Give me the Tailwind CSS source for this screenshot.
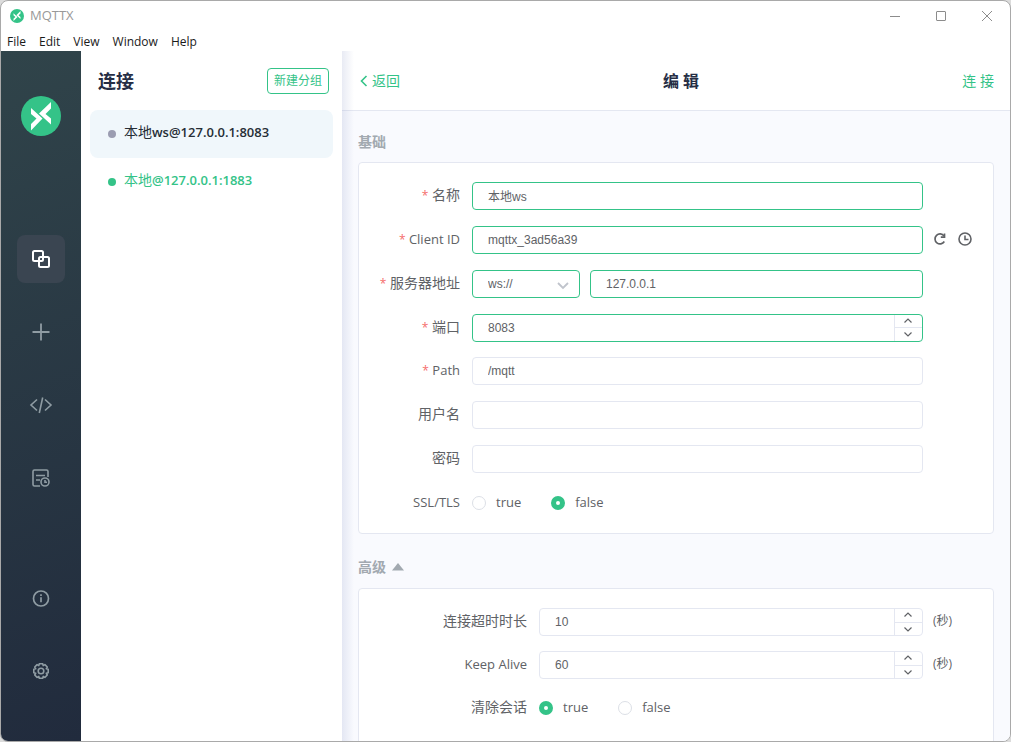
<!DOCTYPE html>
<html lang="zh-CN">
<head>
  <meta charset="UTF-8" />
  <meta name="viewport" content="width=device-width, initial-scale=1" />
  <title>MQTTX</title>
  <!-- Tailwind CSS -->
  <script src="https://cdn.jsdelivr.net/npm/@tailwindcss/browser@4"></script>
</head>
<body class="bg-[#dcdcdc] font-['Open_Sans','Noto_Sans_CJK_SC',sans-serif] text-[#606266]">
  <div class="flex h-screen flex-col overflow-hidden rounded-lg border border-[#a9a9a9] bg-white">

    <!-- Title bar -->
    <header>
      <div class="flex h-[29px] items-center justify-between pl-[9px] pr-[17px]">
        <div class="flex items-center gap-1.5 text-[13px] text-[#999]">
          <svg class="size-3.5" viewBox="0 0 40 40"><circle cx="20" cy="20" r="20" fill="#34c388"/><path fill="#fff" d="M10 12 21.500 22.500 10 34.500V28L15.500 22.500 10 18ZM30 6V12.500L24.500 18 30 22.500V28.500L18 17.500Z"/></svg>
          <span>MQTTX</span>
        </div>
        <div class="flex items-center gap-[34px] text-[#8c8c8c]">
          <button type="button" aria-label="Minimize"><svg class="size-3" viewBox="0 0 12 12" fill="none" stroke="currentColor"><path d="M1 6.500h10"/></svg></button>
          <button type="button" aria-label="Maximize"><svg class="size-3" viewBox="0 0 12 12" fill="none" stroke="currentColor"><rect x="1.500" y="1.500" width="9" height="9" rx=".5"/></svg></button>
          <button type="button" aria-label="Close"><svg class="size-3" viewBox="0 0 12 12" fill="none" stroke="currentColor"><path d="m1 1 10 10M11 1 1 11"/></svg></button>
        </div>
      </div>
      <nav class="flex h-[21px] items-center gap-[13px] pt-0.5 pl-1.5 text-xs text-[#1a1a1a]">
        <button type="button">File</button>
        <button type="button">Edit</button>
        <button type="button">View</button>
        <button type="button">Window</button>
        <button type="button">Help</button>
      </nav>
    </header>

    <div class="flex min-h-0 flex-1">
      <!-- Left bar -->
      <aside class="flex w-20 shrink-0 flex-col items-center bg-linear-[160deg] from-[#30444a] to-[#212b3d] pt-[45px] pb-[46px] text-[#8f9ca3]">
        <svg class="size-10 shrink-0" viewBox="0 0 40 40"><circle cx="20" cy="20" r="20" fill="#34c388"/><path fill="#fff" d="M10 12 21.500 22.500 10 34.500V28L15.500 22.500 10 18ZM30 6V12.500L24.500 18 30 22.500V28.500L18 17.500Z"/></svg>
        <nav class="mt-[99px] flex flex-1 flex-col gap-[25px]">
          <a href="#" aria-label="Connections" class="flex size-12 items-center justify-center rounded-lg bg-[#3a4551] text-white">
            <svg class="size-5" viewBox="0 0 20 20" fill="none" stroke="currentColor" stroke-width="2"><rect x="2" y="2" width="10" height="10" rx="1.500"/><rect x="8" y="8" width="10" height="10" rx="1.500"/></svg>
          </a>
          <a href="#" aria-label="New connection" class="flex size-12 items-center justify-center">
            <svg class="size-5" viewBox="0 0 20 20" fill="none" stroke="currentColor" stroke-width="1.800"><path d="M10 1.500v17M1.500 10h17"/></svg>
          </a>
          <a href="#" aria-label="Scripts" class="flex size-12 items-center justify-center">
            <svg class="h-5 w-6" viewBox="0 0 24 20" fill="none" stroke="currentColor" stroke-width="1.600"><path d="M8 4.500 2 10l6 5.500M16 4.500l6 5.500-6 5.500M13.700 2.500l-3.400 15.500"/></svg>
          </a>
          <a href="#" aria-label="Logs" class="flex size-12 items-center justify-center">
            <svg class="size-5" viewBox="0 0 20 20" fill="none" stroke="currentColor" stroke-width="1.600"><path d="M9 18H3.500A1.500 1.500 0 0 1 2 16.500v-13A1.500 1.500 0 0 1 3.500 2h12A1.500 1.500 0 0 1 17 3.500V9M5 7.500h9M5 12h4"/><circle cx="14" cy="14" r="4"/><path d="M14 12v2.300h2"/></svg>
          </a>
          <a href="#" aria-label="About" class="mt-auto flex size-12 items-center justify-center">
            <svg class="size-5" viewBox="0 0 20 20" fill="none" stroke="currentColor" stroke-width="1.700"><circle cx="10" cy="10.500" r="7.500"/><path d="M10 9.300v5M10 6.300v1.700"/></svg>
          </a>
          <a href="#" aria-label="Settings" class="flex size-12 items-center justify-center">
            <svg class="size-5" viewBox="0 0 20 20" fill="none" stroke="currentColor" stroke-width="1.600" stroke-linejoin="round"><path d="M7.800 4.600 8.300 2.700h3.400l.5 1.900 1.700-1 2.400 2.400-1 1.700 1.900.5v3.600l-1.900.5 1 1.700-2.400 2.400-1.700-1-.5 1.900H8.300l-.5-1.900-1.700 1L3.700 14l1-1.700-1.900-.5V8.200l1.900-.5-1-1.700 2.400-2.400Z"/><circle cx="10" cy="10" r="2.800"/></svg>
          </a>
        </nav>
      </aside>

      <!-- Connection list -->
      <section class="w-[261px] shrink-0 px-[9px]">
        <div class="flex h-[59px] items-center justify-between pl-2 pr-1">
          <h1 class="text-lg font-bold text-[#262e45]">连接</h1>
          <button type="button" class="h-[26px] rounded border border-[#34c388] px-1.5 text-xs text-[#34c388]">新建分组</button>
        </div>
        <ul class="text-[13px] font-semibold">
          <li>
            <a href="#" class="flex h-12 items-center gap-2 rounded-lg bg-[#f0f7fb] pl-[18px] text-[#262e36]">
              <span class="size-2 rounded-full bg-[#9b9db1]"></span>
              <span class="pb-1"><span class="text-sm font-normal">本地</span>ws@127.0.0.1:8083</span>
            </a>
          </li>
          <li>
            <a href="#" class="flex h-12 items-center gap-2 rounded-lg pl-[18px] text-[#34c388]">
              <span class="size-2 rounded-full bg-[#34c388]"></span>
              <span class="pb-1"><span class="text-sm font-normal">本地</span>@127.0.0.1:1883</span>
            </a>
          </li>
        </ul>
      </section>

      <!-- Editor -->
      <main class="relative flex min-w-0 flex-1 flex-col bg-[#f9fafe]">
        <div class="pointer-events-none absolute inset-y-0 left-0 w-3 bg-linear-to-r from-[#8f9bc8]/20 to-transparent"></div>
        <div class="grid h-[60px] shrink-0 grid-cols-3 items-center border-b border-[#e4e7f1] bg-white px-4 text-sm">
          <a href="#" class="flex items-center gap-1 justify-self-start pl-0.5 text-[#34c388]">
            <svg class="h-3 w-2" viewBox="0 0 8 12" fill="none" stroke="currentColor" stroke-width="1.600"><path d="M6.500 1 1.500 6l5 5"/></svg>
            返回
          </a>
          <h2 class="justify-self-center pl-2.5 text-base font-bold text-[#262e45]">编 辑</h2>
          <button type="button" class="justify-self-end text-[#34c388]">连 接</button>
        </div>

        <form class="min-h-0 flex-1 overflow-hidden px-4 pt-[21px] text-sm">
          <h3 class="h-5 text-sm leading-5 font-bold text-[#a2a9b0]">基础</h3>
          <div class="mt-2.5 flex min-h-[372px] flex-col justify-between rounded border border-[#e4e7f1] bg-white pt-[19px] pr-[70px] pb-4">
            <div class="flex h-7 items-center gap-3">
              <label for="name" class="w-[101px] shrink-0 pb-0.5 text-right"><span class="text-xs text-[#f56c6c]">*</span> 名称</label>
              <input id="name" type="text" value="本地ws" class="h-7 min-w-0 flex-1 rounded border border-[#34c388] bg-white px-[15px] pb-0.5 font-['Liberation_Sans','Noto_Sans_CJK_SC',sans-serif] text-xs outline-none">
            </div>
            <div class="relative flex h-7 items-center gap-3">
              <label for="clientId" class="w-[101px] shrink-0 pb-0.5 text-right text-[13px]"><span class="text-xs text-[#f56c6c]">*</span> Client ID</label>
              <input id="clientId" type="text" value="mqttx_3ad56a39" class="h-7 min-w-0 flex-1 rounded border border-[#34c388] bg-white px-[15px] font-['Liberation_Sans','Noto_Sans_CJK_SC',sans-serif] text-xs outline-none">
              <div class="absolute left-full -mt-0.5 ml-2.5 flex gap-[11px]">
                <button type="button" aria-label="Refresh"><svg class="size-3.5" viewBox="0 0 14 14" fill="none" stroke="currentColor" stroke-width="1.700"><path d="M11.300 9.500A5 5 0 1 1 11 3.900"/><path d="M11.500 1.500v3.700H7.800"/></svg></button>
                <button type="button" aria-label="Timestamp"><svg class="size-3.5" viewBox="0 0 14 14" fill="none" stroke="currentColor" stroke-width="1.600"><circle cx="7" cy="7" r="6"/><path d="M7 3.500V7.500h3.500"/></svg></button>
              </div>
            </div>
            <div class="flex h-7 items-center gap-3">
              <label for="host" class="w-[101px] shrink-0 pb-0.5 text-right"><span class="text-xs text-[#f56c6c]">*</span> 服务器地址</label>
              <div class="flex min-w-0 flex-1 gap-2.5">
                <div class="relative w-[108px] shrink-0">
                  <select aria-label="Protocol" class="h-7 w-full appearance-none rounded border border-[#34c388] bg-white px-[15px] font-['Liberation_Sans',sans-serif] text-xs outline-none">
                    <option>ws://</option>
                  </select>
                  <svg class="pointer-events-none absolute top-2 right-2.5 size-3.5 text-[#c0c4cc]" viewBox="0 0 14 14" fill="none" stroke="currentColor" stroke-width="1.800"><path d="m2 5 5 5 5-5"/></svg>
                </div>
                <input id="host" type="text" value="127.0.0.1" class="h-7 min-w-0 flex-1 rounded border border-[#34c388] bg-white px-[15px] font-['Liberation_Sans',sans-serif] text-xs outline-none">
              </div>
            </div>
            <div class="flex h-7 items-center gap-3">
              <label for="port" class="w-[101px] shrink-0 pb-0.5 text-right"><span class="text-xs text-[#f56c6c]">*</span> 端口</label>
              <div class="flex h-7 min-w-0 flex-1 overflow-hidden rounded border border-[#34c388] bg-white">
                <input id="port" type="text" inputmode="numeric" value="8083" class="min-w-0 flex-1 px-[15px] font-['Liberation_Sans',sans-serif] text-xs outline-none">
                <div class="flex w-7 flex-col divide-y divide-[#e4e7f1] border-l border-[#e4e7f1]">
                  <button type="button" aria-label="Increase" class="flex flex-1 items-center justify-center pr-px"><svg class="h-1.5 w-2" viewBox="0 0 8 6" fill="none" stroke="currentColor" stroke-width="1.200"><path d="m.5 4.500 3.500-3.500 3.500 3.500"/></svg></button>
                  <button type="button" aria-label="Decrease" class="flex flex-1 items-center justify-center pr-px"><svg class="h-1.5 w-2" viewBox="0 0 8 6" fill="none" stroke="currentColor" stroke-width="1.200"><path d="m.5 1.500 3.500 3.500 3.500-3.500"/></svg></button>
                </div>
              </div>
            </div>
            <div class="flex h-7 items-center gap-3">
              <label for="path" class="w-[101px] shrink-0 pb-0.5 text-right text-[13px]"><span class="text-xs text-[#f56c6c]">*</span> Path</label>
              <input id="path" type="text" value="/mqtt" class="h-7 min-w-0 flex-1 rounded border border-[#e4e7f1] bg-white px-[15px] font-['Liberation_Sans',sans-serif] text-xs outline-none">
            </div>
            <div class="flex h-7 items-center gap-3">
              <label for="username" class="w-[101px] shrink-0 pb-0.5 text-right">用户名</label>
              <input id="username" type="text" class="h-7 min-w-0 flex-1 rounded border border-[#e4e7f1] bg-white px-[15px] font-['Liberation_Sans',sans-serif] text-xs outline-none">
            </div>
            <div class="flex h-7 items-center gap-3">
              <label for="password" class="w-[101px] shrink-0 pb-0.5 text-right">密码</label>
              <input id="password" type="password" class="h-7 min-w-0 flex-1 rounded border border-[#e4e7f1] bg-white px-[15px] font-['Liberation_Sans',sans-serif] text-xs outline-none">
            </div>
            <div class="flex h-7 items-center gap-3" role="radiogroup" aria-labelledby="sslLabel">
              <span id="sslLabel" class="w-[101px] shrink-0 pb-0.5 text-right text-[13px]">SSL/TLS</span>
              <div class="flex gap-[30px] text-[13px] font-medium">
                <label class="flex items-center gap-2.5"><input type="radio" name="ssl" class="size-3.5 appearance-none rounded-full border border-[#dcdfe6] bg-white checked:border-5 checked:border-[#34c388]"><span class="pb-0.5">true</span></label>
                <label class="flex items-center gap-2.5"><input type="radio" name="ssl" checked class="size-3.5 appearance-none rounded-full border border-[#dcdfe6] bg-white checked:border-5 checked:border-[#34c388]"><span class="pb-0.5">false</span></label>
              </div>
            </div>
          </div>

          <h3 class="mt-[23px] flex h-5 items-center gap-1.5 text-sm leading-5 font-bold text-[#a2a9b0]">
            高级
            <svg class="h-2 w-3" viewBox="0 0 12 8" fill="currentColor"><path d="M6 0 12 7.500H0Z"/></svg>
          </h3>
          <div class="mt-[11px] flex min-h-[372px] flex-col gap-[15px] rounded border border-[#e4e7f1] bg-white pt-[19px] pr-[70px]">
            <div class="relative flex h-7 items-center gap-3">
              <label for="timeout" class="w-[168px] shrink-0 pb-0.5 text-right">连接超时时长</label>
              <div class="flex h-7 min-w-0 flex-1 overflow-hidden rounded border border-[#e4e7f1] bg-white">
                <input id="timeout" type="text" inputmode="numeric" value="10" class="min-w-0 flex-1 px-[15px] font-['Liberation_Sans',sans-serif] text-xs outline-none">
                <div class="flex w-7 flex-col divide-y divide-[#e4e7f1] border-l border-[#e4e7f1]">
                  <button type="button" aria-label="Increase" class="flex flex-1 items-center justify-center pr-px"><svg class="h-1.5 w-2" viewBox="0 0 8 6" fill="none" stroke="currentColor" stroke-width="1.200"><path d="m.5 4.500 3.500-3.500 3.500 3.500"/></svg></button>
                  <button type="button" aria-label="Decrease" class="flex flex-1 items-center justify-center pr-px"><svg class="h-1.5 w-2" viewBox="0 0 8 6" fill="none" stroke="currentColor" stroke-width="1.200"><path d="m.5 1.500 3.500 3.500 3.500-3.500"/></svg></button>
                </div>
              </div>
              <span class="absolute left-full ml-2.5 pb-0.5 text-xs">(秒)</span>
            </div>
            <div class="relative flex h-7 items-center gap-3">
              <label for="keepalive" class="w-[168px] shrink-0 pb-0.5 text-right text-[13px]">Keep Alive</label>
              <div class="flex h-7 min-w-0 flex-1 overflow-hidden rounded border border-[#e4e7f1] bg-white">
                <input id="keepalive" type="text" inputmode="numeric" value="60" class="min-w-0 flex-1 px-[15px] font-['Liberation_Sans',sans-serif] text-xs outline-none">
                <div class="flex w-7 flex-col divide-y divide-[#e4e7f1] border-l border-[#e4e7f1]">
                  <button type="button" aria-label="Increase" class="flex flex-1 items-center justify-center pr-px"><svg class="h-1.5 w-2" viewBox="0 0 8 6" fill="none" stroke="currentColor" stroke-width="1.200"><path d="m.5 4.500 3.500-3.500 3.500 3.500"/></svg></button>
                  <button type="button" aria-label="Decrease" class="flex flex-1 items-center justify-center pr-px"><svg class="h-1.5 w-2" viewBox="0 0 8 6" fill="none" stroke="currentColor" stroke-width="1.200"><path d="m.5 1.500 3.500 3.500 3.500-3.500"/></svg></button>
                </div>
              </div>
              <span class="absolute left-full ml-2.5 pb-0.5 text-xs">(秒)</span>
            </div>
            <div class="flex h-7 items-center gap-3" role="radiogroup" aria-labelledby="cleanLabel">
              <span id="cleanLabel" class="w-[168px] shrink-0 pb-0.5 text-right">清除会话</span>
              <div class="flex gap-[30px] text-[13px] font-medium">
                <label class="flex items-center gap-2.5"><input type="radio" name="clean" checked class="size-3.5 appearance-none rounded-full border border-[#dcdfe6] bg-white checked:border-5 checked:border-[#34c388]"><span class="pb-0.5">true</span></label>
                <label class="flex items-center gap-2.5"><input type="radio" name="clean" class="size-3.5 appearance-none rounded-full border border-[#dcdfe6] bg-white checked:border-5 checked:border-[#34c388]"><span class="pb-0.5">false</span></label>
              </div>
            </div>
          </div>
        </form>
      </main>
    </div>
  </div>
</body>
</html>
